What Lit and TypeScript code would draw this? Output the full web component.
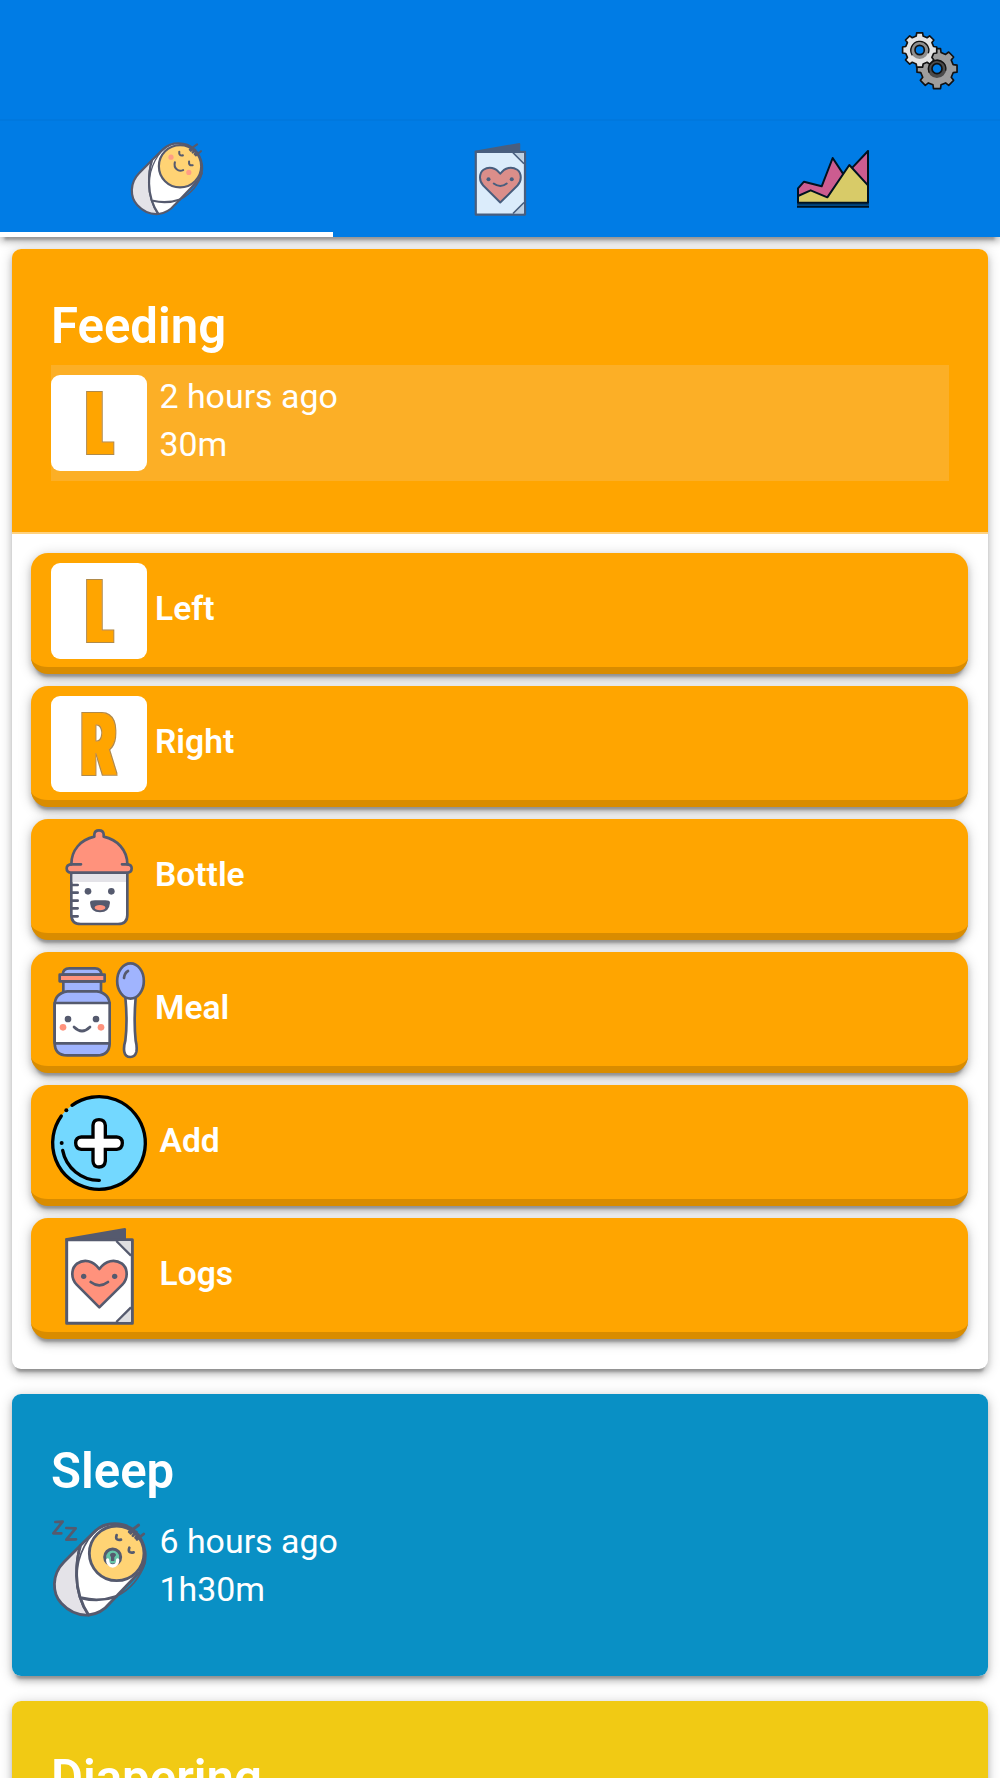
import { LitElement, html, svg, css, nothing, SVGTemplateResult } from "lit";
import { customElement, property } from "lit/decorators.js";

const INK = "#555a6e";

/** Closed outline of a cog wheel with flat-topped teeth. */
function gearPath(cx: number, cy: number, outer: number, root: number, teeth: number): string {
  const step = (Math.PI * 2) / teeth;
  const pts: string[] = [];
  for (let i = 0; i < teeth; i++) {
    const a = i * step - Math.PI / 2;
    const corners: [number, number][] = [
      [-0.31, root],
      [-0.22, outer],
      [0.22, outer],
      [0.31, root],
    ];
    for (const [f, r] of corners) {
      const t = a + f * step;
      pts.push(`${(cx + Math.cos(t) * r).toFixed(1)} ${(cy + Math.sin(t) * r).toFixed(1)}`);
    }
  }
  return "M" + pts.join("L") + "Z";
}

const letter = (ch: string, x: number, width: number, spread: number) => svg`
  <defs>
    <filter id="fat" x="-60%" y="-10%" width="220%" height="120%">
      <feMorphology in="SourceGraphic" operator="dilate" radius="${spread} 0" result="bold" />
      <feMorphology in="bold" operator="dilate" radius="1" result="grown" />
      <feFlood flood-color="#b08a4a" />
      <feComposite in2="grown" operator="in" result="edge" />
      <feMerge><feMergeNode in="edge" /><feMergeNode in="bold" /></feMerge>
    </filter>
  </defs>
  <rect width="96" height="96" rx="9" fill="#fff" />
  <text class="glyph" x=${x} y="79.300" textLength=${width} lengthAdjust="spacingAndGlyphs"
    filter="url(#fat)" fill="#ffa500">${ch}</text>`;

const bundle = svg`
  <g stroke=${INK} stroke-width="8.5" stroke-linejoin="round" stroke-linecap="round">
    <path d="M242 434L192 484C154 522 156 578 184 608C208 634 238 645 266 643C243 609 231 571 230 526Q229 474 242 434Z" fill="#e4e3e8" />
    <path d="M242 434L286 390C316 362 374 362 404 392C440 426 446 480 419 514L330 607Q304 639 266 643C243 609 231 571 230 526Q229 474 242 434Z" fill="#fff" />
    <path d="M245 592Q298 605 350 587" fill="none" />
    <path d="M312 376C262 398 232 466 230 526" fill="none" stroke-width="5" />
    <path d="M436 484Q414 554 350 587" fill="none" stroke-width="5" />
    <circle cx="350" cy="458" r="82" fill="#ffd374" />
    <path d="M388 394L416 373M392 398L400 390M399 405L409 394M407 411L414 402M411 416L431 400" fill="none" />
  </g>`;

const booklet = svg`
  <path d="M196 82L374 51Q378 51 378 55V88H196Z" fill=${INK} />
  <path d="M200 86H397V337H200Z" fill="#fff" stroke=${INK} stroke-width="9" stroke-linejoin="round" />
  <path d="M354 91H392V127Z M354 332H392V294Z" fill="#dedee1" />
  <path d="M349 90L393 134M349 333L393 289" stroke=${INK} stroke-width="7" />
  <path d="M298 289L230 221C212 203 213 172 231 158C252 143 279 148 298 174C317 148 344 143 366 158C384 172 385 203 367 221Z"
    fill="#ff927c" stroke=${INK} stroke-width="8" stroke-linejoin="round" />
  <circle cx="251" cy="196" r="8" fill=${INK} /><circle cx="344" cy="196" r="8" fill=${INK} />
  <path d="M272 213Q298 233 324 213" fill="none" stroke=${INK} stroke-width="8" stroke-linecap="round" />`;

const icons: Record<string, { box: string; art: SVGTemplateResult }> = {
  gears: {
    box: "63 35 174 174",
    art: svg`
      <g stroke="#111" stroke-linejoin="round">
        <path d=${gearPath(171, 145, 61, 50, 8)} fill="#9d9d9d" stroke-width="5" />
        <circle cx="171" cy="145" r="21" fill="none" stroke="#4b4b4b" stroke-width="14" />
        <path d="M148 157A26 26 0 1 1 197 151" fill="none" stroke-width="4" />
        <circle cx="171" cy="145" r="15" fill="#007ce5" stroke-width="5" />
        <path d=${gearPath(119, 89, 52, 43, 8)} fill="#e3e3e3" stroke-width="5" />
        <circle cx="119" cy="89" r="21" fill="none" stroke="#8f8f8f" stroke-width="12" />
        <path d="M97 105A27 27 0 1 1 145 99" fill="none" stroke-width="4" />
        <circle cx="119" cy="89" r="14" fill="#007ce5" stroke-width="5" />
      </g>`,
  },
  baby: {
    box: "160 368 279 279",
    art: svg`${bundle}
      <g fill="none" stroke=${INK} stroke-width="8" stroke-linecap="round">
        <path d="M347 402Q345 419 361 416M385 440Q383 457 399 454" />
        <path d="M330 443C324 467 344 481 362 473" />
      </g>
      <circle cx="315" cy="423" r="10" fill="#ff9d84" /><circle cx="384" cy="482" r="10" fill="#ff9d84" />`,
  },
  sleeper: {
    box: "153 358 288 288",
    art: svg`${bundle}
      <g fill="none" stroke=${INK} stroke-width="8" stroke-linecap="round" stroke-linejoin="round">
        <path d="M350 403Q344 421 363 417M388 441Q382 459 401 455" />
        <path d="M166 364L188 363L160 398L184 398M199 382L227 383L199 417L228 416" />
      </g>
      <circle cx="338" cy="469" r="24" fill="#66c5a8" stroke=${INK} stroke-width="9" />
      <path d="M323 478A15 18 0 1 0 353 478" fill="none" stroke="#fff" stroke-width="10" stroke-linecap="round" />
      <path d="M330 464A9 8 0 0 1 348 464L343 470V481H333V470Z" fill=${INK} />`,
  },
  booklet: { box: "153 51 288 288", art: booklet },
  chart: {
    box: "52 39 216 216",
    art: svg`
      <g stroke="#000" stroke-width="6" stroke-linejoin="round">
        <path d="M55 218V175L73 155L126 169L159 84L190 131L218 113L265 63V218Z" fill="#ee5783" />
        <path d="M55 218V198L93 181L143 202L209 105L265 166V218Z" fill="#fcd954" />
        <path d="M52 230H268" />
      </g>
      <path d="M52 224H268" stroke="#00345f" stroke-width="6" />`,
  },
  left: { box: "0 0 96 96", art: letter("L", 38, 21, 4) },
  right: { box: "0 0 96 96", art: letter("R", 30.5, 34.5, 2) },
  bottle: {
    box: "63 56 288 288",
    art: svg`
      <g stroke=${INK} stroke-width="8" stroke-linecap="round" stroke-linejoin="round">
        <path d="M124 188H292V314Q292 341 264 341H152Q124 341 124 314Z" fill="#fff" />
        <path d="M128 191H288V215H128Z" fill="#e4e3e8" stroke="none" />
        <path d="M124 162C124 119 152 88 193 79V72Q194 60 207 60Q220 60 221 72V79C262 88 292 119 292 162Q305 163 305 174Q305 187 292 187H122Q110 186 110 174Q110 163 124 162Z" fill="#ff927c" />
        <path d="M122 162H153M276 162H294" />
        <path d="M126 224H143M126 247H143M126 271H143M126 294H143M126 318H143" />
      </g>
      <circle cx="174" cy="243" r="10" fill=${INK} /><circle cx="244" cy="243" r="10" fill=${INK} />
      <path d="M180 277Q180 270 195 270H226Q240 270 240 277Q238 306 210 306Q182 306 180 277Z" fill=${INK} />
      <ellipse cx="210" cy="292" rx="16" ry="8" fill="#ff927c" />`,
  },
  meal: {
    box: "63 50 288 288",
    art: svg`
      <g stroke=${INK} stroke-width="8" stroke-linejoin="round">
        <path d="M98 88Q99 69 118 69H195Q213 69 215 88Z" fill="#a0b4fe" />
        <path d="M100 108H213V140H100Z" fill="#a0b4fe" />
        <path d="M89 88H224V108H89Z" fill="#ff927c" />
        <path d="M112 138H201Q239 144 239 180V292Q239 330 201 330H112Q74 330 74 292V180Q74 144 112 138Z" fill="#a0b4fe" />
        <path d="M74 173H239V294H74Z" fill="#fff" />
        <path d="M286 155H317Q311 230 317 286Q322 306 319 320Q315 335 301 335Q286 335 283 320Q280 306 286 286Q293 230 286 155Z" fill="#fff" />
        <ellipse cx="301.500" cy="107" rx="40" ry="53" fill="#a0b4fe" />
        <path d="M282 98Q284 82 294 77" fill="none" stroke-linecap="round" />
        <path d="M132 245Q156 269 180 245" fill="none" stroke-linecap="round" />
      </g>
      <circle cx="114" cy="221" r="10" fill=${INK} /><circle cx="198" cy="221" r="10" fill=${INK} />
      <circle cx="99" cy="246" r="10" fill="#ff927c" /><circle cx="213" cy="246" r="10" fill="#ff927c" />`,
  },
  add: {
    box: "63 43 288 288",
    art: svg`
      <circle cx="207" cy="187" r="139" fill="#73d8ff" />
      <g fill="none" stroke="#000" stroke-width="10" stroke-linecap="round">
        <path d="M126 74A139 139 0 1 1 94 106" />
        <path d="M98 209A111 111 0 0 0 208 299" />
        <path d="M189 169V134Q190 117 207 117Q224 117 226 134V169H260Q277 170 277 187Q277 204 260 206H226V241Q224 259 207 259Q190 259 189 241V206H154Q137 204 137 187Q137 170 154 169Z" fill="#fff" />
      </g>
      <circle cx="109" cy="89" r="6" /><circle cx="95" cy="187" r="6" />`,
  },
};

const shadow = css`0 7.3px 2.4px -4.8px rgba(0, 0, 0, 0.22), 0 4.8px 6px rgba(0, 0, 0, 0.16),
  0 2.4px 13px rgba(0, 0, 0, 0.2)`;

@customElement("app-icon")
export class AppIcon extends LitElement {
  @property() name = "";

  static styles = css`
    :host {
      display: block;
      flex: none;
    }
    .art {
      display: block;
      width: 100%;
      height: 100%;
      overflow: visible;
    }
    .glyph {
      font: 900 87px Roboto, sans-serif;
    }
  `;

  render() {
    const icon = icons[this.name];
    return icon ? html`<svg class="art" viewBox=${icon.box}>${icon.art}</svg>` : nothing;
  }
}

@customElement("activity-card")
export class ActivityCard extends LitElement {
  @property() heading = "";
  @property() tone = "";
  @property() icon = "";
  @property() ago = "";
  @property() duration = "";
  @property({ type: Boolean }) pressed = false;
  @property({ attribute: false }) actions: { icon: string; label: string; wide?: boolean }[] = [];

  static styles = css`
    :host {
      display: block;
    }
    .card {
      border-radius: 9px;
      overflow: hidden;
      background: #fff;
      box-shadow: ${shadow};
    }
    .head {
      box-sizing: border-box;
      height: 282px;
      padding: 49px 39px 0;
      color: #fff;
    }
    .feeding {
      height: 283px;
      background: #ffa500;
    }
    .sleep {
      background: #0990c5;
    }
    .diapering {
      background: #f1ca14;
    }
    .title {
      margin: 0;
      font-size: 49.100px;
      line-height: 57px;
      font-weight: 600;
    }
    .latest {
      display: flex;
      gap: 12.500px;
      box-sizing: border-box;
      height: 116px;
      margin-top: 10px;
      padding-top: 10px;
    }
    .pressed {
      background: #fcaf26;
    }
    .icon {
      width: 96px;
      height: 96px;
    }
    .when {
      margin-top: -2px;
      font-size: 33.900px;
      line-height: 48.300px;
    }
    .actions {
      display: flex;
      flex-direction: column;
      gap: 12px;
      padding: 19px 20px 30px 19px;
      border-top: 2px solid #ffd280;
    }
    .action {
      display: flex;
      align-items: flex-start;
      gap: 8px;
      box-sizing: border-box;
      height: 121px;
      padding: 10px 20px 0;
      border: 0;
      border-bottom: 7px solid #d98c00;
      border-radius: 17px;
      background: #ffa500;
      color: #fff;
      font: 600 33.600px/40px Roboto, sans-serif;
      text-align: left;
      box-shadow: ${shadow};
    }
    .wide {
      gap: 12.500px;
    }
    .label {
      margin-top: 26px;
    }
  `;

  render() {
    return html`
      <section class="card">
        <header class="head ${this.tone}">
          <h2 class="title">${this.heading}</h2>
          ${this.icon
            ? html`<div class="latest ${this.pressed ? "pressed" : ""}">
                <app-icon class="icon" name=${this.icon}></app-icon>
                <div class="when">
                  <div>${this.ago}</div>
                  <div>${this.duration}</div>
                </div>
              </div>`
            : nothing}
        </header>
        ${this.actions.length
          ? html`<div class="actions">
              ${this.actions.map(
                (a) => html`<button class="action ${a.wide ? "wide" : ""}">
                  <app-icon class="icon" name=${a.icon}></app-icon>
                  <span class="label">${a.label}</span>
                </button>`
              )}
            </div>`
          : nothing}
      </section>
    `;
  }
}

@customElement("app-root")
export class AppRoot extends LitElement {
  private feeding = [
    { icon: "left", label: "Left" },
    { icon: "right", label: "Right" },
    { icon: "bottle", label: "Bottle" },
    { icon: "meal", label: "Meal" },
    { icon: "add", label: "Add", wide: true },
    { icon: "booklet", label: "Logs", wide: true },
  ];

  static styles = css`
    :host {
      display: flex;
      flex-direction: column;
      height: 1778px;
      overflow: hidden;
      background: #fff;
      font-family: Roboto, sans-serif;
    }
    .top {
      flex: none;
      background: #007ce5;
      box-shadow: ${shadow};
    }
    .toolbar {
      display: flex;
      justify-content: flex-end;
      box-sizing: border-box;
      height: 121px;
      padding: 31.500px 41px 0;
      border-bottom: 2px solid #0078de;
    }
    .gears {
      width: 58px;
      height: 58px;
    }
    .tabs {
      display: grid;
      grid-template-columns: repeat(3, 1fr);
      height: 116px;
    }
    .tab {
      display: flex;
      justify-content: center;
      box-sizing: border-box;
      padding-top: 22.300px;
    }
    .active {
      border-bottom: 5px solid #fff;
    }
    .tab-icon {
      width: 72px;
      height: 72px;
    }
    .dim {
      opacity: 0.86;
    }
    .feed {
      flex: 1;
      display: flex;
      flex-direction: column;
      gap: 25px;
      padding: 12px 12px 0;
      min-height: 0;
    }
    .item {
      flex: none;
    }
  `;

  render() {
    return html`
      <div class="top">
        <div class="toolbar"><app-icon class="gears" name="gears"></app-icon></div>
        <nav class="tabs">
          <div class="tab active"><app-icon class="tab-icon" name="baby"></app-icon></div>
          <div class="tab"><app-icon class="tab-icon dim" name="booklet"></app-icon></div>
          <div class="tab"><app-icon class="tab-icon dim" name="chart"></app-icon></div>
        </nav>
      </div>
      <main class="feed">
        <activity-card class="item" heading="Feeding" tone="feeding" icon="left" ago="2 hours ago"
          duration="30m" pressed .actions=${this.feeding}></activity-card>
        <activity-card class="item" heading="Sleep" tone="sleep" icon="sleeper" ago="6 hours ago"
          duration="1h30m"></activity-card>
        <activity-card class="item" heading="Diapering" tone="diapering"></activity-card>
      </main>
    `;
  }
}
